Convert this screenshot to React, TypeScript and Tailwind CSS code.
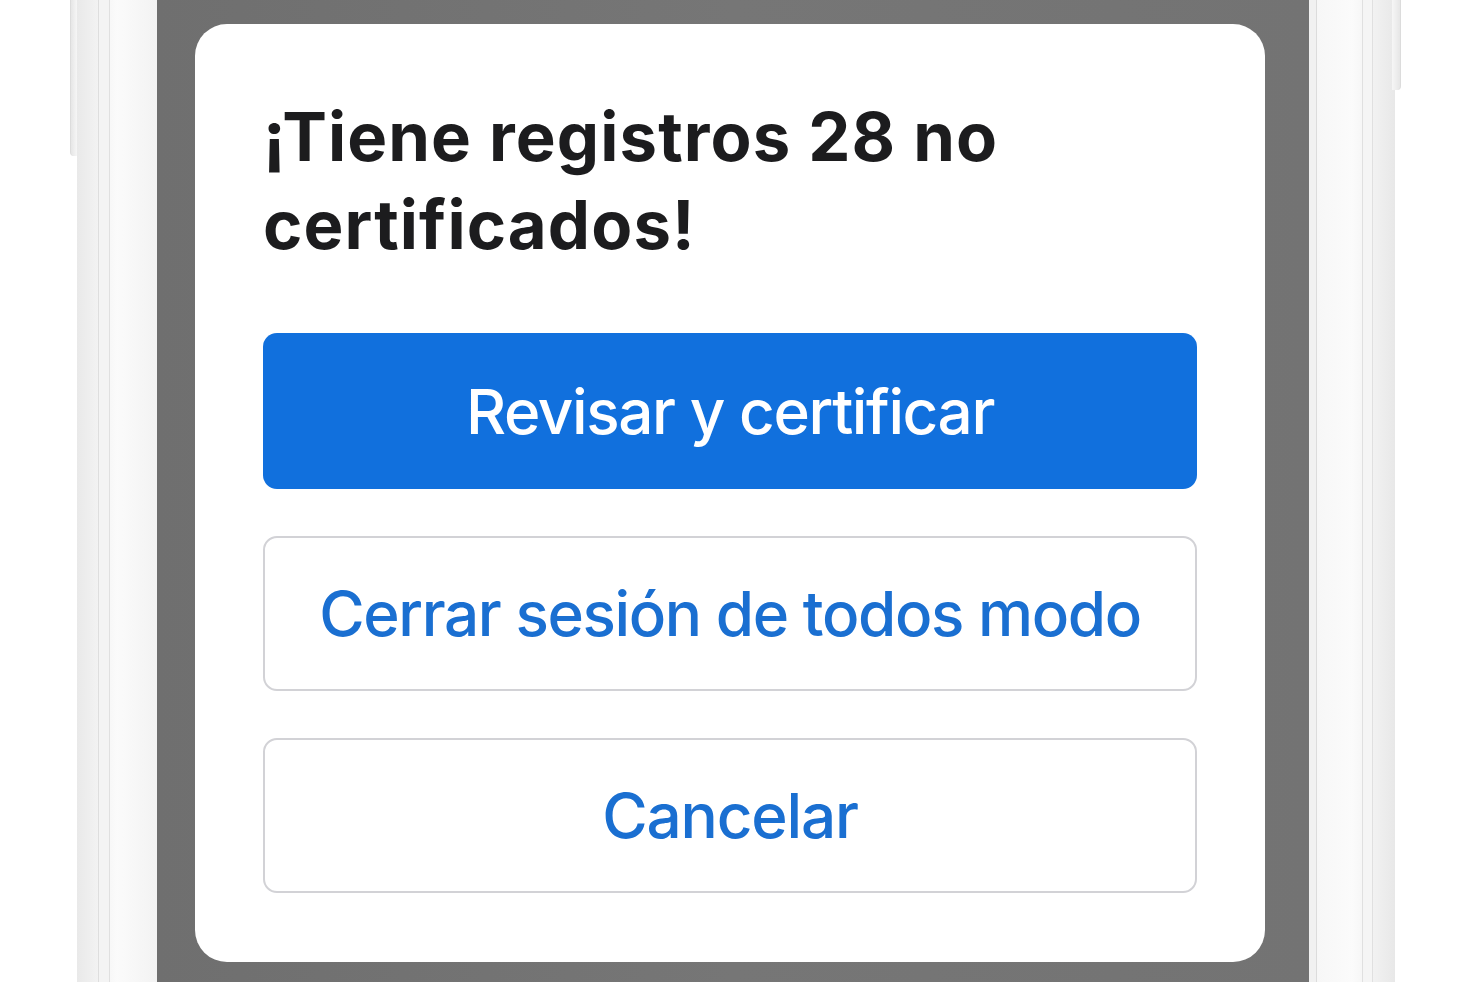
import React from "react";

const font = { fontFamily: "Inter, 'Noto Sans', 'Liberation Sans', sans-serif" };

export default function App() {
    return (
        <div className="flex h-[982px] w-[1478px] overflow-hidden bg-white" style={font}>
            {/* left outside + side button */}
            <div className="flex w-[77px] shrink-0 justify-end">
                <div className="h-[156px] w-[7px] rounded-bl-[4px] border-l border-[#dcdcdc] bg-gradient-to-r from-[#e6e6e6] to-[#f6f6f6]" />
            </div>

            {/* left bezel */}
            <div className="flex w-[80px] shrink-0 bg-gradient-to-r from-[#e9e9e9] via-[#fbfbfb] to-[#f3f3f3]">
                <div className="w-[21px]" />
                <div className="w-px bg-[#dedede]" />
                <div className="w-[10px] bg-[#f4f4f4]" />
                <div className="w-px bg-[#e0e0e0]" />
                <div className="flex-1" />
            </div>

            {/* screen */}
            <div className="flex w-[1152px] shrink-0 bg-gradient-to-r from-[#6f6f6f] via-[#767676] to-[#737373] pl-[38px] pt-[24px]">
                <div className="flex h-[938px] w-[1070px] flex-col rounded-[32px] bg-white px-[68px] pt-[69px]">
                    <h1 className="text-[67px] font-bold leading-[88px] tracking-[1.1px] text-[#1c1c1e]">
                        ¡Tiene registros 28 no certificados!
                    </h1>

                    <div className="mt-[64px] flex flex-col gap-[47px]">
                        <button className="flex h-[156px] items-center justify-center rounded-[14px] bg-[#1170dd] text-[62px] font-medium tracking-[-1.4px] text-white">
                            Revisar y certificar
                        </button>
                        <button className="flex h-[155px] items-center justify-center rounded-[14px] border-2 border-[#d2d2d6] bg-white text-[62px] font-medium tracking-[-1.4px] text-[#1a6fd1]">
                            Cerrar sesión de todos modo
                        </button>
                        <button className="flex h-[155px] items-center justify-center rounded-[14px] border-2 border-[#d2d2d6] bg-white text-[62px] font-medium tracking-[-1.2px] text-[#1a6fd1]">
                            Cancelar
                        </button>
                    </div>
                </div>
            </div>

            {/* right bezel */}
            <div className="flex w-[86px] shrink-0 bg-gradient-to-r from-[#f6f6f6] via-[#fbfbfb] to-[#e8e8e8]">
                <div className="w-[7px] bg-[#f1f1f1]" />
                <div className="w-px bg-[#dcdcdc]" />
                <div className="w-[45px]" />
                <div className="w-px bg-[#e0e0e0]" />
                <div className="w-[9px] bg-[#f5f5f5]" />
                <div className="w-px bg-[#e0e0e0]" />
                <div className="flex-1" />
            </div>

            {/* right outside + side button */}
            <div className="flex flex-1 justify-start">
                <div className="-ml-[3px] h-[90px] w-[9px] rounded-br-[4px] border-r border-[#dcdcdc] bg-gradient-to-r from-[#f6f6f6] to-[#e6e6e6]" />
            </div>
        </div>
    );
}
